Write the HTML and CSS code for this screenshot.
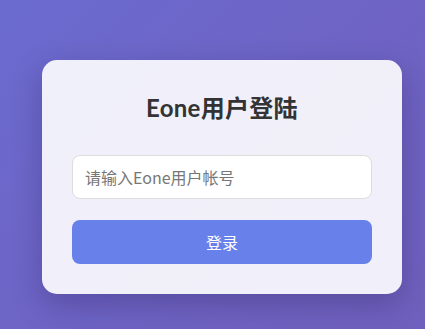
FILE: index.html
```html
<!DOCTYPE html>
<html lang="zh-CN">
<head>
<meta charset="utf-8">
<title>Eone用户登陆</title>
<link rel="stylesheet" href="styles.css">
</head>
<body>
<main class="page">
  <form class="card">
    <h2 class="title">Eone用户登陆</h2>
    <input class="field" type="text" placeholder="请输入Eone用户帐号">
    <button class="btn" type="button">登录</button>
  </form>
</main>
</body>
</html>
```

FILE: styles.css
```css
html, body {
  margin: 0;
  padding: 0;
  height: 100%;
}
body {
  background: linear-gradient(135deg, #6b6bcf 0%, #6e64c5 50%, #7060bd 100%);
  font-family: "Noto Sans CJK SC", "Noto Sans", sans-serif;
  color: #333;
}
.page {
  box-sizing: border-box;
  height: 329px;
  padding-top: 60px;
  padding-left: 42px;
}
.card {
  box-sizing: border-box;
  width: 360px;
  height: 234px;
  padding: 30px;
  background: rgba(255, 255, 255, 0.9);
  border-radius: 15px;
  box-shadow: 0 10px 30px rgba(20, 10, 60, 0.25);
  display: flex;
  flex-direction: column;
}
.title {
  margin: 0 0 30px;
  height: 35px;
  line-height: 35px;
  text-align: center;
  font-size: 24px;
  font-weight: 700;
  font-family: "Lato", "Noto Sans CJK SC", sans-serif;
  letter-spacing: 0.3px;
  color: #333;
}
.field {
  box-sizing: border-box;
  width: 300px;
  height: 44px;
  padding: 0 12px;
  border: 1px solid #ddd;
  border-radius: 8px;
  background: #fff;
  font-size: 16px;
  font-family: "Noto Sans CJK SC", sans-serif;
  color: #333;
  outline: none;
}
.field::placeholder {
  color: #777;
}
.btn {
  margin-top: 21px;
  width: 300px;
  height: 44px;
  border: none;
  border-radius: 8px;
  background: #6780ea;
  color: #fff;
  font-size: 16px;
  font-family: "Noto Sans CJK SC", sans-serif;
  cursor: pointer;
}
```
